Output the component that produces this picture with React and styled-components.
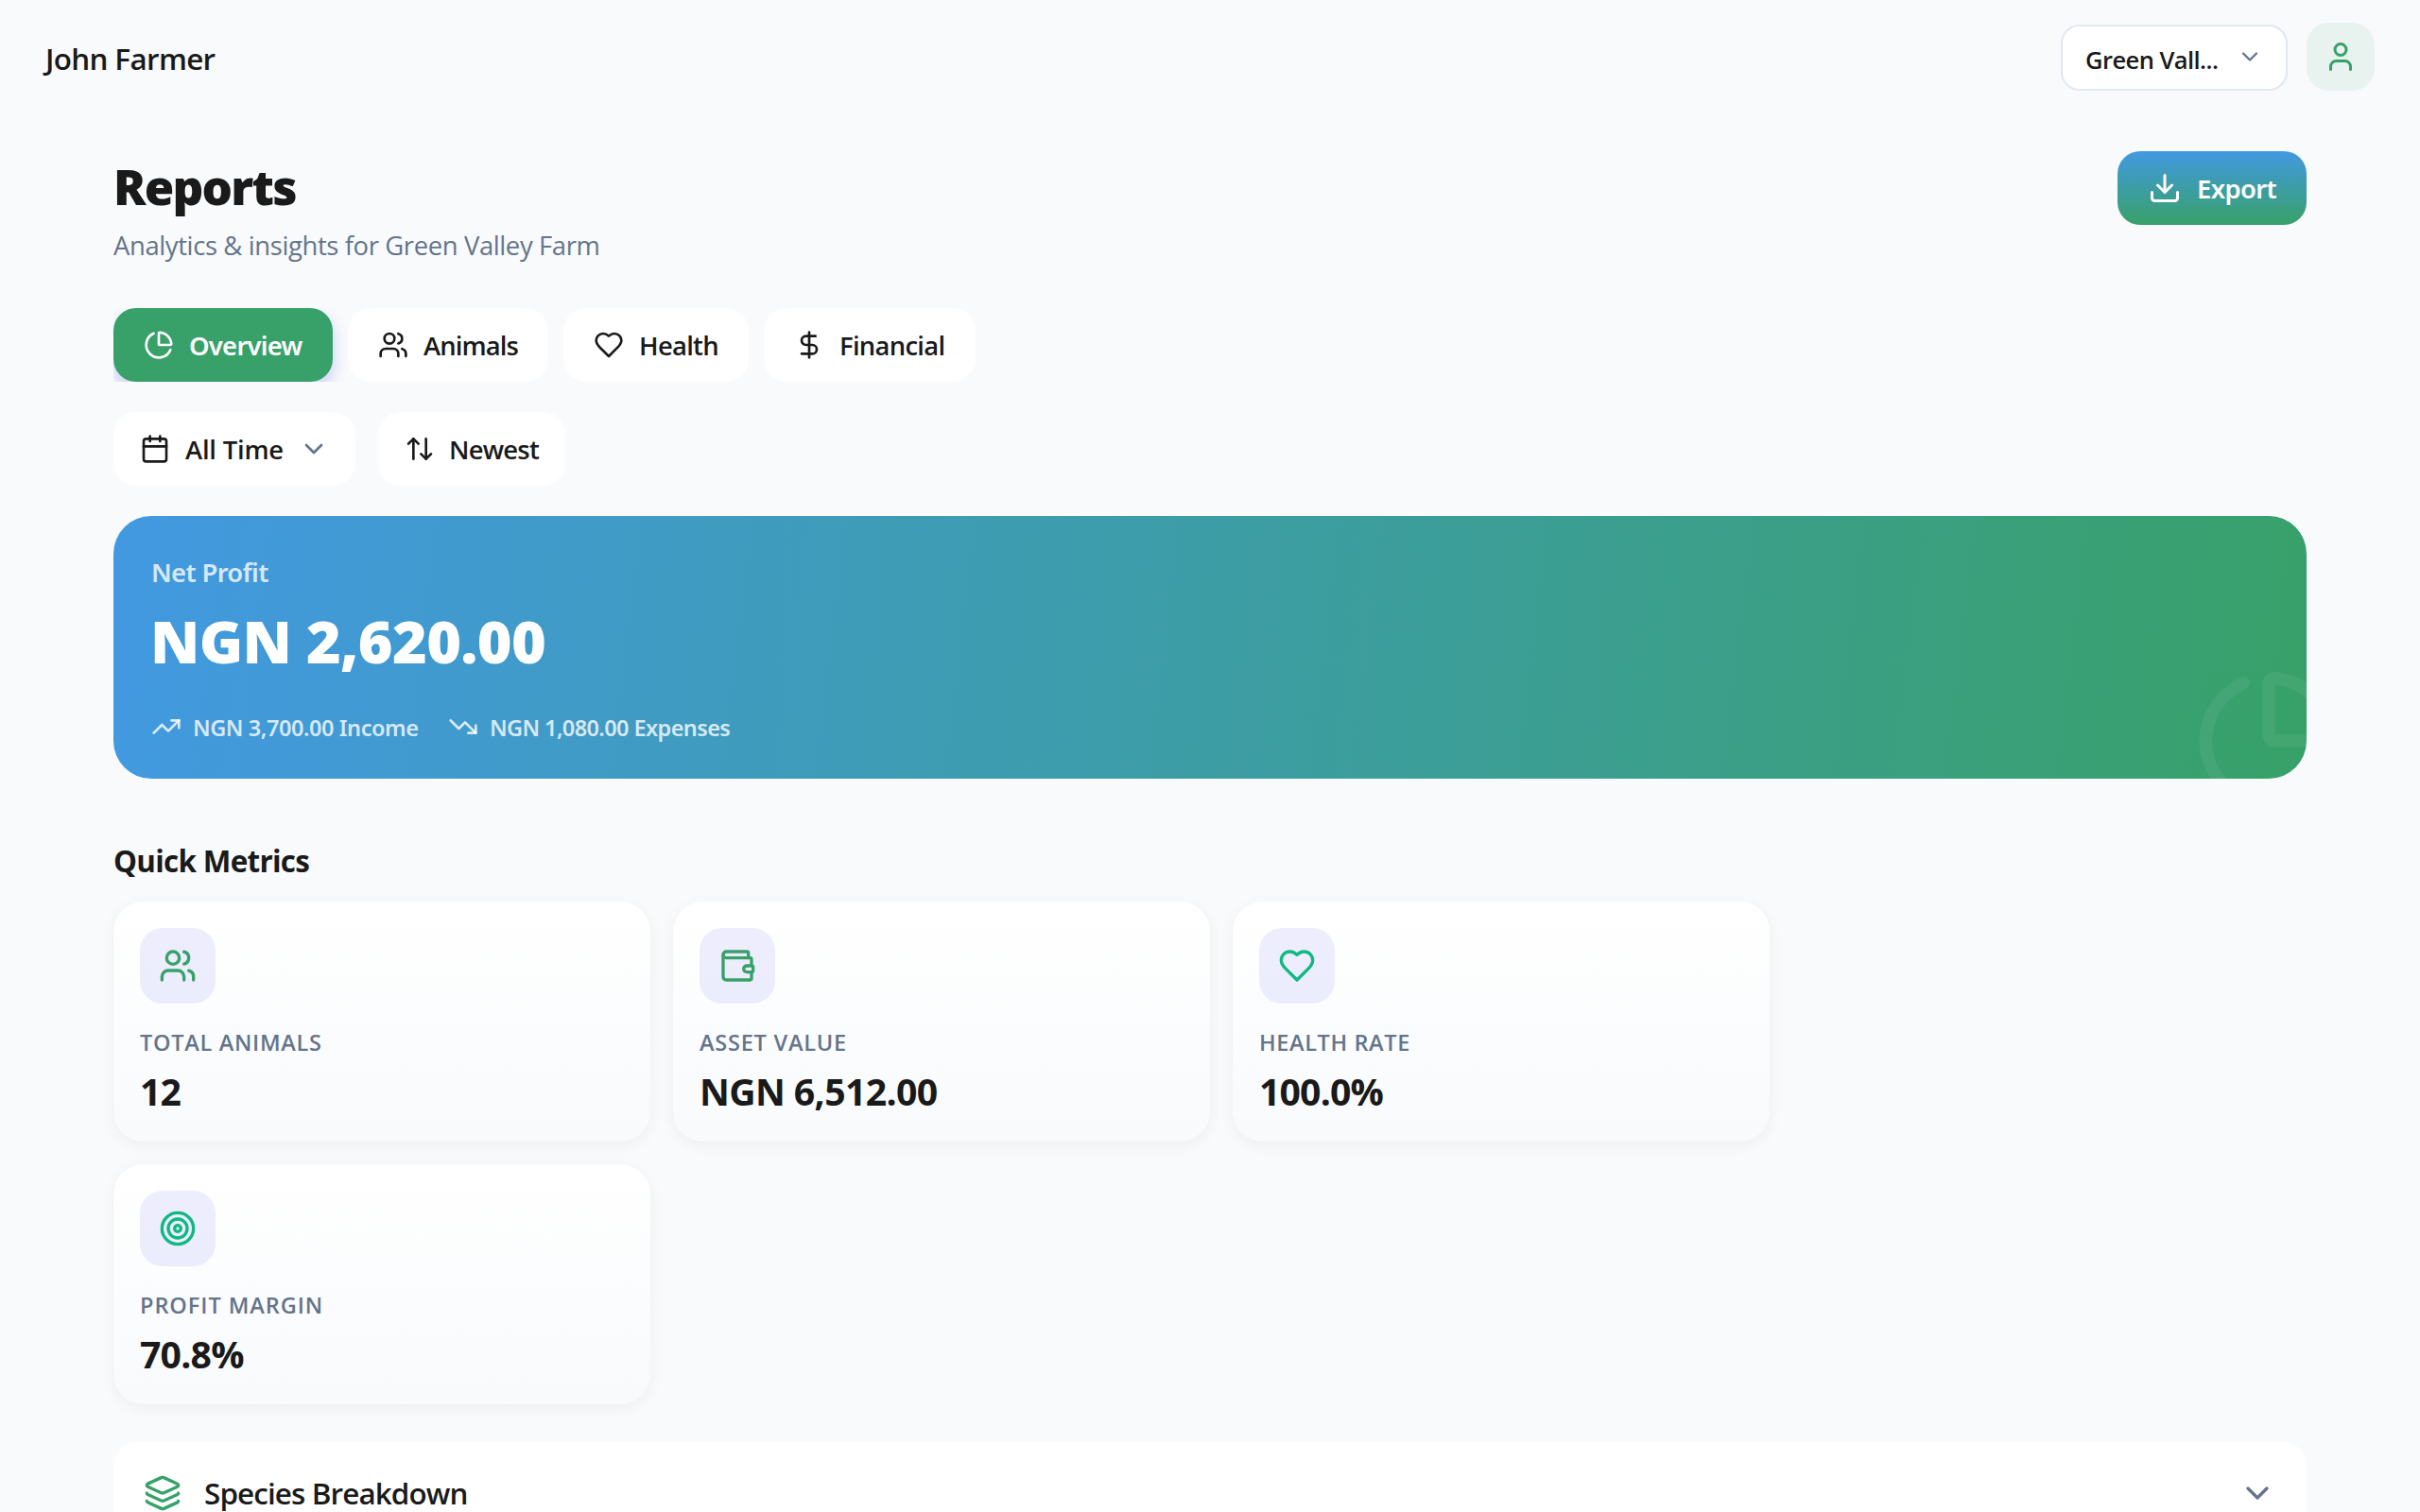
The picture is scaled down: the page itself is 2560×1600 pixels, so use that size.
import styled, { createGlobalStyle, css } from 'styled-components';
import {
  ArrowUpDown,
  Calendar,
  ChartPie,
  ChevronDown,
  DollarSign,
  Download,
  Layers,
  Target,
  TrendingDown,
  TrendingUp,
  User,
  Users,
  Wallet,
} from 'lucide-react';

function Heart({ size, color = 'currentColor' }) {
  return (
    <svg
      width={size}
      height={size}
      viewBox='0 0 24 24'
      fill='none'
      stroke={color}
      strokeWidth='2'
      strokeLinecap='round'
      strokeLinejoin='round'
    >
      <path d='M19 14c1.49-1.46 3-3.21 3-5.5A5.5 5.5 0 0 0 16.5 3c-1.76 0-3 .5-4.5 2-1.5-1.5-2.74-2-4.5-2A5.5 5.5 0 0 0 2 8.5c0 2.3 1.5 4.05 3 5.5l7 7Z' />
    </svg>
  );
}

const tabs = [
  { label: 'Overview', icon: ChartPie, width: 120, spacing: -0.72, active: true },
  { label: 'Animals', icon: Users, width: 100, spacing: -0.9 },
  { label: 'Health', icon: Heart, width: 84, spacing: -0.7 },
  { label: 'Financial', icon: DollarSign, width: 112, spacing: -0.7 },
];

const metrics = [
  { label: 'Total Animals', value: '12', icon: Users, color: '#38a169', labelSpacing: 0.7, valueSpacing: -1 },
  { label: 'Asset Value', value: 'NGN 6,512.00', icon: Wallet, color: '#38a169', labelSpacing: 0.78, valueSpacing: -0.62 },
  { label: 'Health Rate', value: '100.0%', icon: Heart, color: '#10b981', labelSpacing: 0.62, valueSpacing: -0.85 },
  { label: 'Profit Margin', value: '70.8%', icon: Target, color: '#10b981', labelSpacing: 0.95, valueSpacing: -0.8 },
];

function App() {
  return (
    <Page>
      <GlobalStyle />
      <TopBar>
        <UserName>John Farmer</UserName>
        <TopActions>
          <FarmSelect>
            <span>Green Vall...</span>
            <ChevronDown size={28} color='#64748b' />
          </FarmSelect>
          <Avatar>
            <User size={36} />
          </Avatar>
        </TopActions>
      </TopBar>

      <Main>
        <Header>
          <div>
            <Title>Reports</Title>
            <Subtitle>Analytics &amp; insights for Green Valley Farm</Subtitle>
          </div>
          <ExportButton>
            <Download size={36} />
            <Label $width={84} $spacing={-0.62} $strong>Export</Label>
          </ExportButton>
        </Header>

        <Tabs>
          {tabs.map(({ label, icon: Icon, width, spacing, active }) => (
            <Tab key={label} $active={active}>
              <Icon size={32} />
              <Label $width={width} $spacing={spacing} $strong={active}>{label}</Label>
            </Tab>
          ))}
        </Tabs>

        <Filters>
          <Filter>
            <Calendar size={32} />
            <Label $width={104} $spacing={-0.2}>All Time</Label>
            <ChevronDown size={32} color='#64748b' />
          </Filter>
          <Filter $gap={15}>
            <ArrowUpDown size={32} />
            <Label $width={95} $spacing={-0.75}>Newest</Label>
          </Filter>
        </Filters>

        <Hero>
          <HeroLabel>Net Profit</HeroLabel>
          <HeroAmount>NGN 2,620.00</HeroAmount>
          <Trends>
            <Trend $width={282} $spacing={-0.42}>
              <TrendingUp size={32} />
              <span>NGN 3,700.00 Income</span>
            </Trend>
            <Trend $spacing={-0.6}>
              <TrendingDown size={32} />
              <span>NGN 1,080.00 Expenses</span>
            </Trend>
          </Trends>
          <HeroMark>
            <ChartPie size={160} />
          </HeroMark>
        </Hero>

        <SectionTitle>Quick Metrics</SectionTitle>
        <Metrics>
          {metrics.map(({ label, value, icon: Icon, color, labelSpacing, valueSpacing }) => (
            <MetricCard key={label}>
              <MetricIcon>
                <Icon size={40} color={color} />
              </MetricIcon>
              <MetricLabel $spacing={labelSpacing}>{label}</MetricLabel>
              <MetricValue $spacing={valueSpacing}>{value}</MetricValue>
            </MetricCard>
          ))}
        </Metrics>

        <Accordion>
          <Layers size={40} color='#38a169' />
          <AccordionTitle>Species Breakdown</AccordionTitle>
          <ChevronDown size={40} color='#64748b' />
        </Accordion>
      </Main>
    </Page>
  );
}

const GlobalStyle = createGlobalStyle`
  * {
    box-sizing: border-box;
    margin: 0;
    padding: 0;
  }

  body {
    background-color: #f8fafc;
    color: #1a1a1a;
    font-family: 'Open Sans', 'Noto Sans', sans-serif;
  }

  svg {
    display: block;
    flex-shrink: 0;
  }
`;

const Page = styled.div`
  width: 2560px;
  height: 1600px;
  overflow: hidden;

  background-color: #f8fafc;
`;

const TopBar = styled.div`
  display: flex;
  justify-content: space-between;
  align-items: center;

  height: 120px;
  padding: 0 48px;
`;

const UserName = styled.p`
  padding-top: 4px;

  font-size: 31.4px;
  font-weight: 600;
  letter-spacing: -0.65px;
  line-height: 44px;
`;

const TopActions = styled.div`
  display: flex;
  align-items: flex-end;
  gap: 20px;
`;

const FarmSelect = styled.button`
  display: flex;
  justify-content: space-between;
  align-items: center;

  width: 240px;
  height: 70px;
  padding: 0 24px 2px 24px;
  border: 2px solid #e2e8f0;
  border-radius: 20px;

  background-color: #fff;
  color: #1a1a1a;
  font-family: inherit;
  font-size: 25.5px;
  font-weight: 600;
  letter-spacing: -0.55px;

  span {
    padding-top: 5px;
    white-space: nowrap;
  }
`;

const Avatar = styled.div`
  display: flex;
  justify-content: center;
  align-items: center;

  width: 72px;
  height: 72px;
  border-radius: 24px;

  background-color: #e8f2ee;
  color: #38a169;
`;

const Main = styled.main`
  padding: 40px 120px 0;
`;

const Header = styled.header`
  display: flex;
  justify-content: space-between;
  align-items: flex-start;

  height: 118px;
`;

const Title = styled.h1`
  padding-top: 1px;

  font-family: 'Noto Sans', sans-serif;
  font-size: 51px;
  font-weight: 900;
  letter-spacing: -1.75px;
  line-height: 72px;
`;

const Subtitle = styled.p`
  margin-top: 8px;

  color: #64748b;
  font-size: 27.4px;
  letter-spacing: -0.36px;
  line-height: 38px;
`;

const buttonStyle = css`
  display: flex;
  align-items: center;
  gap: 16px;

  height: 78px;
  border: none;
  border-radius: 24px;

  font-family: inherit;
  font-size: 27.4px;
  font-weight: 600;
`;

const Label = styled.span`
  width: ${(props) => props.$width}px;
  padding-top: 2px;

  font-family: ${(props) => (props.$strong ? "'Noto Sans', sans-serif" : 'inherit')};
  letter-spacing: ${(props) => props.$spacing}px;
  line-height: 38px;
  text-align: left;
  white-space: nowrap;
`;

const ExportButton = styled.button`
  ${buttonStyle}

  padding: 0 32px;

  background: linear-gradient(180deg, #4299e1, #38a169);
  color: #fff;
`;

/* the scroll area clips the shadow of the active tab */
const Tabs = styled.nav`
  display: flex;
  gap: 16px;

  margin-top: 48px;
  overflow: hidden;
`;

const Tab = styled.button`
  ${buttonStyle}

  padding: 0 32px;

  background-color: ${(props) => (props.$active ? '#38a169' : '#fff')};
  color: ${(props) => (props.$active ? '#fff' : '#1a1a1a')};
  box-shadow: ${(props) => (props.$active ? '0 8px 16px rgba(99, 102, 241, 0.3)' : 'none')};
`;

const Filters = styled.div`
  display: flex;
  gap: 24px;

  margin-top: 32px;
`;

const Filter = styled.button`
  ${buttonStyle}

  gap: ${(props) => props.$gap || 16}px;
  padding: 0 28px;

  background-color: #fff;
  color: #1a1a1a;
`;

const Hero = styled.section`
  position: relative;

  height: 278px;
  margin-top: 32px;
  padding: 41px 40px 40px;
  border-radius: 40px;
  overflow: hidden;

  background: linear-gradient(96.8deg, #4299e1, #38a169);
  color: #fff;
  font-family: 'Noto Sans', sans-serif;
`;

const HeroLabel = styled.p`
  color: rgba(255, 255, 255, 0.8);
  font-size: 27.4px;
  font-weight: 600;
  letter-spacing: -0.64px;
  line-height: 38px;
`;

const HeroAmount = styled.p`
  margin: 8px 0 29px -1px;

  font-size: 62.8px;
  font-weight: 900;
  letter-spacing: -0.65px;
  line-height: 90px;
`;

const Trends = styled.div`
  display: flex;
  gap: 32px;
`;

const Trend = styled.div`
  display: flex;
  align-items: center;
  gap: 12px;

  width: ${(props) => (props.$width ? `${props.$width}px` : 'auto')};

  color: rgba(255, 255, 255, 0.8);
  font-size: 23.5px;
  font-weight: 600;
  letter-spacing: ${(props) => props.$spacing}px;
  line-height: 32px;
  white-space: nowrap;

  span {
    padding-top: 2px;
  }
`;

const HeroMark = styled.div`
  position: absolute;
  right: -40px;
  bottom: -40px;

  opacity: 0.06;
`;

const SectionTitle = styled.h2`
  margin: 65px 0 21px;

  font-size: 31.4px;
  font-weight: 700;
  letter-spacing: -0.7px;
  line-height: 44px;
`;

const Metrics = styled.div`
  display: flex;
  flex-wrap: wrap;
  gap: 24px;
`;

const MetricCard = styled.div`
  width: 568px;
  height: 254px;
  padding: 28px;
  border-radius: 32px;

  background: linear-gradient(180deg, #fff, #f8fafc);
  box-shadow: 0 4px 16px rgba(0, 0, 0, 0.05);
`;

const MetricIcon = styled.div`
  display: flex;
  justify-content: center;
  align-items: center;

  width: 80px;
  height: 80px;
  border-radius: 24px;

  background-color: rgba(99, 96, 250, 0.11);
`;

const MetricLabel = styled.p`
  margin-top: 25px;

  color: #64748b;
  font-size: 23.5px;
  font-weight: 600;
  letter-spacing: ${(props) => props.$spacing}px;
  line-height: 32px;
  text-transform: uppercase;
`;

const MetricValue = styled.p`
  margin-top: 10px;

  font-size: 39.2px;
  font-weight: 700;
  letter-spacing: ${(props) => props.$spacing}px;
  line-height: 52px;
`;

const Accordion = styled.section`
  display: flex;
  align-items: center;
  gap: 24px;

  height: 108px;
  margin-top: 40px;
  padding: 0 32px;
  border-radius: 24px 24px 0 0;

  background-color: #fff;
`;

const AccordionTitle = styled.h3`
  flex: 1;

  font-size: 31.4px;
  font-weight: 600;
  letter-spacing: -0.88px;
  line-height: 44px;
`;

export default App;
